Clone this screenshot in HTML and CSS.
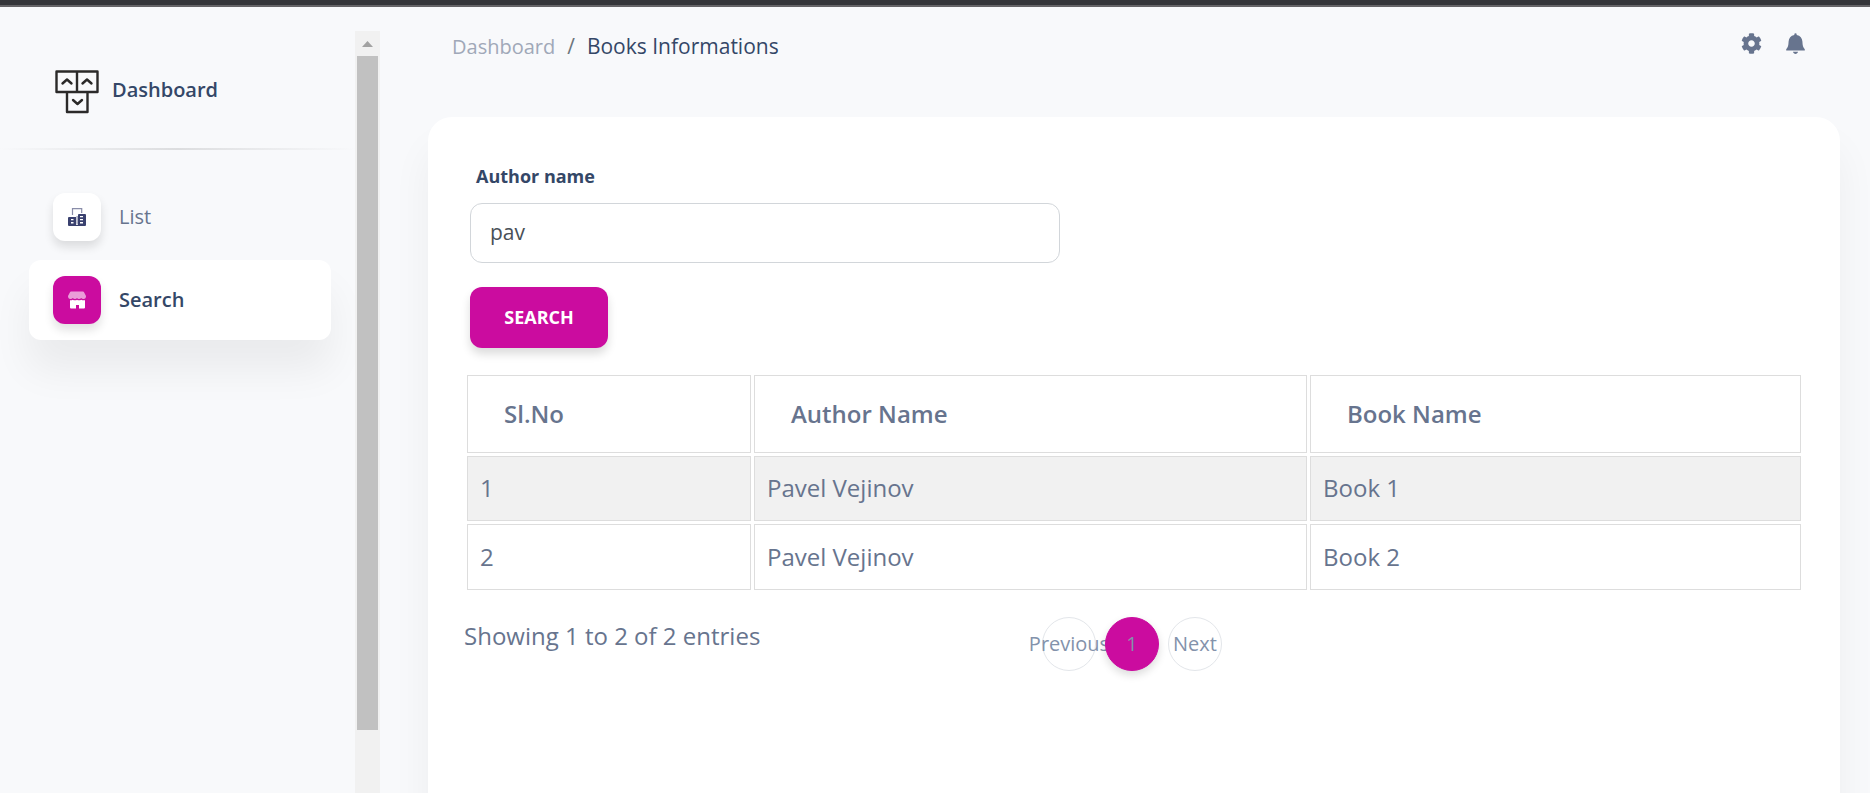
FILE: index.html
```html
<!DOCTYPE html>
<html lang="en">
<head>
<meta charset="utf-8">
<title>Books Informations</title>
<link rel="stylesheet" href="styles.css">
</head>
<body>
<div class="app">
  <aside class="sidebar">
    <div class="sidebar-body">
      <a class="brand" href="#">
        <svg class="brand-logo" viewBox="0 0 44 44" aria-hidden="true">
          <g fill="none" stroke="#2b2a29" stroke-width="2.400" stroke-linejoin="round">
            <path d="M1.500 1.500h41v20.500h-41zM22 1.500v20.500M12 22v20h20.500v-20"/>
            <path d="M7.500 13.500l4.500-4 4.500 4M27.500 13.500l4.500-4 4.500 4M18 30l4.500 4 4.500-4" stroke-linecap="round"/>
          </g>
        </svg>
        <span>Dashboard</span>
      </a>
      <hr class="divider">
      <nav class="menu">
        <a class="menu-item" href="#">
          <span class="menu-icon">
            <svg viewBox="0 0 18 18" aria-hidden="true">
              <path d="M4.500 7V.700h9.200V5" fill="none" stroke="#3a416f" stroke-opacity=".6" stroke-width="1.200"/>
              <path d="M8.500 8h1.200v8.500H8.500z" fill="#3a416f" opacity=".6"/>
              <path fill="#3a416f" fill-rule="evenodd" d="M1 9h7v8h2V7q0-1 1-1h6q1 0 1 1v10q0 1-1 1H1q-1 0-1-1v-7q0-1 1-1zM3 11v1.300h2.500V11zM3 14v1.500h2.500V14zM12 8v1.200h3V8zM12 11v1.300h3V11zM12 14v1.500h3V14z"/>
            </svg>
          </span>
          <span>List</span>
        </a>
        <a class="menu-item active" href="#" aria-current="page">
          <span class="menu-icon">
            <svg viewBox="0 0 18 18" aria-hidden="true">
              <path fill="#fff" opacity=".6" d="M3 0.500h12q.6 0 .9.600L18 5q0 3-2.500 3-1.500 0-2.300-1-.8 1-2.200 1-1.300 0-2-1-.7 1-2 1-1.400 0-2.200-1-.8 1-2.300 1Q0 8 0 5L2.100 1.100q.3-.6.900-.6z"/>
              <path fill="#fff" d="M2 9.300q1.500.2 2.800-.6 1.200.8 2.300.6Q8.300 9.300 9 8.700q.8.600 2 .6 1.200 0 2.200-.6 1.300.8 3.800.6V16.500q0 1-1 1h-5V14H8v3.500H3q-1 0-1-1z"/>
            </svg>
          </span>
          <span>Search</span>
        </a>
      </nav>
    </div>
    <div class="scrollbar" aria-hidden="true">
      <svg class="scroll-arrow" viewBox="0 0 21 25"><path d="M5 16l5.500-6L16 16z" fill="#a2a2a2"/></svg>
      <div class="scroll-thumb"></div>
    </div>
  </aside>

  <main class="main">
    <header class="topbar">
      <nav class="crumbs" aria-label="breadcrumb">
        <a class="crumb-link" href="#">Dashboard</a>
        <span class="crumb-sep">/</span>
        <span>Books Informations</span>
      </nav>
      <div class="actions">
        <button class="icon-button" type="button" aria-label="Settings">
          <svg viewBox="0 0 512 512"><path d="M487.400 315.700l-42.600-24.600c4.300-23.200 4.300-47 0-70.200l42.600-24.600c4.900-2.800 7.100-8.600 5.500-14-11.100-35.600-30-67.800-54.700-94.600-3.800-4.100-10-5.100-14.800-2.300L380.800 110c-17.900-15.400-38.500-27.300-60.800-35.100V25.800c0-5.600-3.900-10.500-9.400-11.700-36.700-8.200-74.300-7.800-109.200 0-5.500 1.200-9.400 6.100-9.400 11.700V75c-22.200 7.900-42.800 19.800-60.800 35.100L88.700 85.500c-4.900-2.800-11-1.900-14.800 2.300-24.700 26.700-43.600 58.900-54.700 94.600-1.700 5.400.6 11.200 5.500 14L67.300 221c-4.300 23.200-4.300 47 0 70.200l-42.600 24.600c-4.900 2.800-7.100 8.600-5.500 14 11.100 35.600 30 67.800 54.700 94.600 3.800 4.100 10 5.100 14.800 2.300l42.600-24.600c17.900 15.400 38.500 27.300 60.800 35.100v49.200c0 5.600 3.900 10.500 9.400 11.700 36.700 8.200 74.300 7.800 109.200 0 5.500-1.200 9.400-6.100 9.400-11.700v-49.200c22.200-7.900 42.800-19.800 60.800-35.100l42.600 24.600c4.900 2.800 11 1.900 14.800-2.300 24.700-26.700 43.600-58.900 54.700-94.600 1.500-5.500-.7-11.300-5.600-14.100zM256 336c-44.100 0-80-35.900-80-80s35.900-80 80-80 80 35.900 80 80-35.900 80-80 80z"/></svg>
        </button>
        <button class="icon-button" type="button" aria-label="Notifications">
          <svg viewBox="0 0 21 21"><path d="M9.300 1.500a1.200 1.200 0 0 1 2.400 0v.6c3.600.6 5.500 3.200 5.700 6.400.2 4 .6 6 2.400 7.700V17.500H1.200V16.200C3 14.500 3.400 12.500 3.600 8.500 3.800 5.300 5.700 2.700 9.300 2.100zM8 18.800h5c-.3 1.300-1.300 2.100-2.500 2.100S8.300 20.100 8 18.800z"/></svg>
        </button>
      </div>
    </header>

    <section class="card">
      <form class="search-form">
        <label class="field-label" for="author">Author name</label>
        <input class="field-input" id="author" type="text" value="pav">
        <button class="search-button" type="button">SEARCH</button>
      </form>

      <table class="books">
        <colgroup><col class="col-number"><col class="col-author"><col></colgroup>
        <thead>
          <tr><th scope="col">Sl.No</th><th scope="col">Author Name</th><th scope="col">Book Name</th></tr>
        </thead>
        <tbody>
          <tr class="shaded"><td>1</td><td>Pavel Vejinov</td><td>Book 1</td></tr>
          <tr><td>2</td><td>Pavel Vejinov</td><td>Book 2</td></tr>
        </tbody>
      </table>

      <div class="table-footer">
        <div class="entries">Showing 1 to 2 of 2 entries</div>
        <nav class="pager" aria-label="Pages">
          <a class="page" href="#">Previous</a>
          <a class="page current" href="#" aria-current="page">1</a>
          <a class="page" href="#">Next</a>
        </nav>
      </div>
    </section>
  </main>
</div>
</body>
</html>
```
FILE: styles.css
```css
* { box-sizing: border-box; }

body {
  margin: 0;
  background: #f8f9fb;
  color: #67748e;
  font-family: "Open Sans", "Noto Sans", sans-serif;
  font-size: 20px;
  line-height: 30px;
}

a { color: inherit; text-decoration: none; }

.app {
  display: flex;
  height: 100vh;
  overflow: hidden;
  border-top: 5px solid #35363a;
  box-shadow: inset 0 2px #656467;
}

/* Sidebar */
.sidebar {
  display: flex;
  flex: 0 0 380px;
  margin-top: 26px;
}

.sidebar-body { flex: 1; }

.brand {
  display: flex;
  align-items: center;
  gap: 13px;
  padding: 39px 55px 34px;
  color: #344767;
  font-weight: 600;
  line-height: 28px;
}

.brand span { padding-bottom: 4px; }

.brand-logo { width: 44px; height: 44px; }

.divider {
  height: 2px;
  margin: 0;
  border: 0;
  background: linear-gradient(90deg, transparent, #dcdddf, transparent);
}

.menu {
  display: flex;
  flex-direction: column;
  gap: 3px;
  padding: 27px 24px 0 29px;
}

.menu-item {
  display: flex;
  align-items: center;
  gap: 18px;
  height: 80px;
  padding: 0 24px;
  border-radius: 12px;
}

.menu-item.active {
  background: #fff;
  color: #344767;
  font-weight: 600;
  box-shadow: 0 30px 40px rgba(0, 0, 0, .06);
}

.menu-icon {
  display: grid;
  place-items: center;
  width: 48px;
  height: 48px;
  border-radius: 12px;
  background: #fff;
  box-shadow: 0 6px 10px rgba(20, 20, 20, .12);
}

.menu-icon svg { width: 18px; height: 18px; }

.active .menu-icon { background: #cb0c9f; }

.scrollbar {
  display: grid;
  grid-template-rows: 25px 674fr 63fr;
  width: 25px;
  padding: 0 2px;
  background: #f1f1f1;
}

.scroll-arrow { display: block; width: 21px; height: 25px; }

.scroll-thumb { background: #c1c1c1; }

/* Main column */
.main {
  display: flex;
  flex: 1;
  flex-direction: column;
  padding: 2px 30px 0 48px;
}

.topbar {
  display: flex;
  justify-content: space-between;
  height: 110px;
  padding: 24px 33px 0 24px;
}

.crumbs {
  display: flex;
  align-items: baseline;
  gap: 12px;
  color: #344767;
  font-size: 21px;
}

.crumb-link { color: #a0a8b8; font-size: 20px; }

.crumb-sep { color: #6c757d; }

.actions { display: flex; gap: 22px; }

.icon-button {
  width: 22px;
  height: 24px;
  padding: 0;
  border: 0;
  background: none;
}

.icon-button svg { display: block; width: 21px; height: 21px; fill: #67748e; }

.card {
  flex: 1;
  margin-bottom: -48px;
  padding: 44px 36px 0;
  border-radius: 24px;
  background: #fff;
  box-shadow: 0 30px 40px rgba(0, 0, 0, .05);
}

.search-form {
  display: flex;
  flex-direction: column;
  align-items: flex-start;
  padding: 0 6px;
}

.field-label {
  margin-bottom: 12px;
  padding-left: 6px;
  color: #344767;
  font-size: 18px;
  font-weight: 700;
}

.field-input {
  width: 44.4%;
  height: 60px;
  padding: 0 19px 2px;
  border: 1px solid #d2d6da;
  border-radius: 12px;
  color: #495057;
  font: inherit;
  font-size: 21px;
}

.search-button {
  width: 138px;
  height: 61px;
  margin: 24px 0;
  padding: 0 0 2px;
  border: 0;
  border-radius: 12px;
  background: #cb0c9f;
  color: #fff;
  font: inherit;
  font-size: 18px;
  font-weight: 700;
  box-shadow: 0 6px 10px rgba(0, 0, 0, .14);
}

.books {
  width: 100%;
  border-spacing: 3px;
  table-layout: fixed;
  font-size: 24px;
  line-height: 36px;
}

.col-number { width: 284px; }
.col-author { width: 553px; }

.books th,
.books td {
  border: 1px solid #ddd;
  text-align: left;
}

.books th { padding: 20px 36px; font-weight: 600; }

.books td { height: 66px; padding: 0 12px; }

.books .shaded td { height: 65px; padding-bottom: 2px; background: #f1f1f1; }

.table-footer {
  display: grid;
  grid-template-columns: 1fr auto 1fr;
  padding: 24px 4px 0 0;
}

.entries { font-size: 24px; line-height: 38px; }

.pager { display: flex; gap: 9px; }

.page {
  display: flex;
  align-items: center;
  justify-content: center;
  width: 54px;
  height: 54px;
  border: 1px solid #e3e6ea;
  border-radius: 50%;
  color: #8392ab;
}

.page.current {
  z-index: 1;
  border-color: #cb0c9f;
  background: #cb0c9f;
  box-shadow: 0 4px 8px rgba(0, 0, 0, .14);
}
```
